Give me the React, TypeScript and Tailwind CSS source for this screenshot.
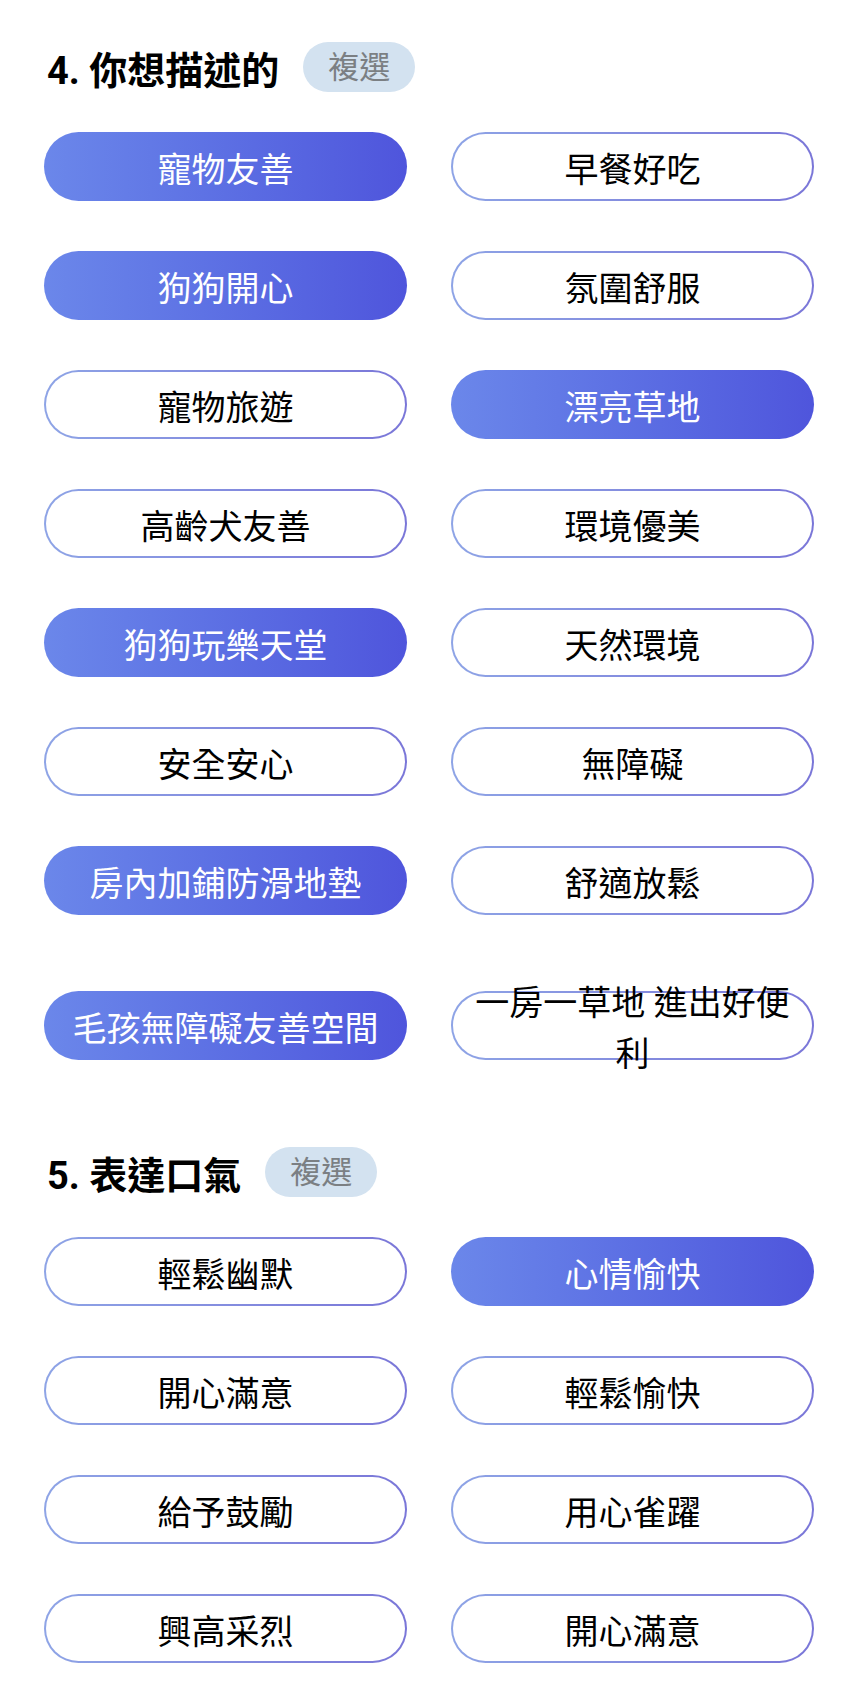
import { useState } from 'react'
import clsx from 'clsx'

type Option = { id: string; label: string; selected?: boolean }

const describeOptions: Option[] = [
  { id: 'pet-friendly', label: '寵物友善', selected: true },
  { id: 'breakfast', label: '早餐好吃' },
  { id: 'happy-dog', label: '狗狗開心', selected: true },
  { id: 'atmosphere', label: '氛圍舒服' },
  { id: 'pet-travel', label: '寵物旅遊' },
  { id: 'lawn', label: '漂亮草地', selected: true },
  { id: 'senior-dog', label: '高齡犬友善' },
  { id: 'scenery', label: '環境優美' },
  { id: 'dog-paradise', label: '狗狗玩樂天堂', selected: true },
  { id: 'nature', label: '天然環境' },
  { id: 'safe', label: '安全安心' },
  { id: 'accessible', label: '無障礙' },
  { id: 'anti-slip', label: '房內加鋪防滑地墊', selected: true },
  { id: 'relaxing', label: '舒適放鬆' },
  { id: 'pet-accessible', label: '毛孩無障礙友善空間', selected: true },
  { id: 'private-lawn', label: '一房一草地 進出好便利' },
]

const toneOptions: Option[] = [
  { id: 'humorous', label: '輕鬆幽默' },
  { id: 'cheerful', label: '心情愉快', selected: true },
  { id: 'satisfied', label: '開心滿意' },
  { id: 'relaxed', label: '輕鬆愉快' },
  { id: 'encouraging', label: '給予鼓勵' },
  { id: 'joyful', label: '用心雀躍' },
  { id: 'excited', label: '興高采烈' },
  { id: 'satisfied-2', label: '開心滿意' },
]

type OptionButtonProps = {
  label: string
  selected: boolean
  onToggle: () => void
}

// The pill keeps its height, a long label wraps over its edges
const OptionButton = ({ label, selected, onToggle }: OptionButtonProps) => (
  <button
    type="button"
    aria-pressed={selected}
    onClick={onToggle}
    className="grid w-full cursor-pointer items-center"
  >
    <span
      className={clsx(
        'col-start-1 row-start-1 h-[69px] rounded-full',
        selected
          ? 'bg-linear-to-r from-[#6b87ea] to-[#4f55dc]'
          : 'border-2 border-transparent [background:linear-gradient(#fff,#fff)_padding-box,linear-gradient(to_right,#8ea4e6,#7a76d8)_border-box]'
      )}
    />
    <span
      className={clsx(
        'col-start-1 row-start-1 px-4 pt-[38px] pb-[30px] text-[34px] leading-[51px]',
        selected ? 'text-white' : 'text-black'
      )}
    >
      {label}
    </span>
  </button>
)

type QuestionProps = {
  title: string
  options: Option[]
}

const Question = ({ title, options }: QuestionProps) => {
  const [selected, setSelected] = useState<string[]>(
    options.filter((o) => o.selected).map((o) => o.id)
  )

  const toggle = (id: string) => {
    setSelected((prev) => (prev.includes(id) ? prev.filter((s) => s !== id) : [...prev, id]))
  }

  return (
    <section className="pt-[37px]">
      <div className="mb-[15px] flex items-start gap-6 pl-[3px]">
        <h2 className="pt-2 text-[38px] leading-[42px] font-bold text-black">{title}</h2>
        <span className="rounded-full bg-[#d3e2f0] px-[25px] pt-[2px] text-[31px] leading-[48px] text-[#7b7f83]">
          複選
        </span>
      </div>
      <div className="grid grid-cols-2 gap-x-11">
        {options.map((option) => (
          <OptionButton
            key={option.id}
            label={option.label}
            selected={selected.includes(option.id)}
            onToggle={() => toggle(option.id)}
          />
        ))}
      </div>
    </section>
  )
}

const App = () => {
  return (
    <main
      lang="zh-Hant"
      className="bg-white px-11 pt-[5px] font-[Roboto,'Noto_Sans_CJK_TC',sans-serif]"
    >
      <Question title="4. 你想描述的" options={describeOptions} />
      <Question title="5. 表達口氣" options={toneOptions} />
    </main>
  )
}

export default App
